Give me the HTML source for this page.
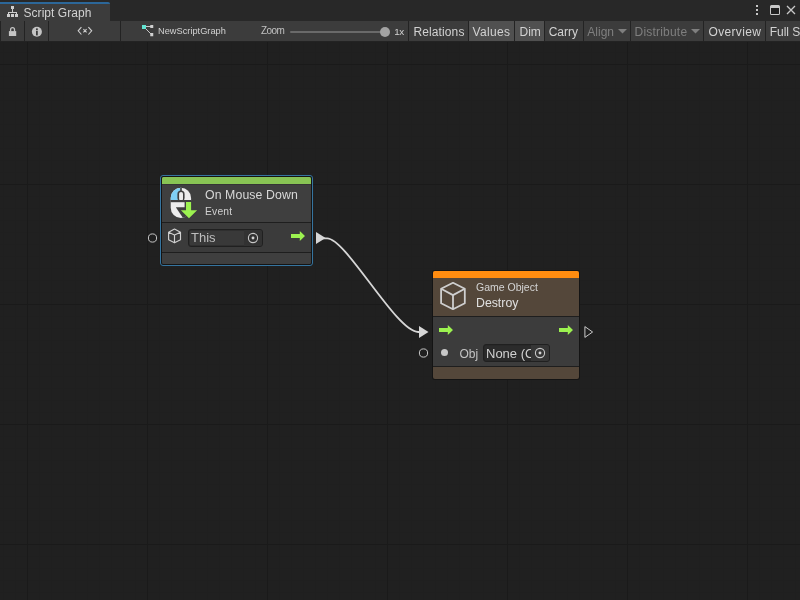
<!DOCTYPE html>
<html><head><meta charset="utf-8">
<style>
*{margin:0;padding:0;box-sizing:border-box}
html,body{width:800px;height:600px;overflow:hidden;background:#202020;font-family:"Liberation Sans",sans-serif}
.a{position:absolute}
#graph{left:0;top:42px;width:800px;height:558px;background-color:#202020;
 background-image:
  linear-gradient(to right,#1a1a1a 1px,transparent 1px),
  linear-gradient(to bottom,#1a1a1a 1px,transparent 1px),
  linear-gradient(to right,#1f1f1f 1px,transparent 1px),
  linear-gradient(to bottom,#1f1f1f 1px,transparent 1px);
 background-size:120px 120px,120px 120px,12px 12px,12px 12px;
 background-position:27px 22px,27px 22px,3px 10px,3px 10px}
#tabstrip{left:0;top:0;width:800px;height:21px;background:#282828}
#tab{left:0;top:2px;width:110px;height:19px;background:#3c3c3c;border-top:2px solid #2c6799;border-top-right-radius:2px}
#toolbar{left:0;top:21px;width:800px;height:21px;background:#3c3c3c;border-bottom:1px solid #232323}
.txt{color:#d2d2d2;white-space:nowrap}
.sep{top:21px;width:1px;height:20px;background:#232323}
.btn{top:21px;height:20px;color:#d2d2d2;font-size:12px;line-height:23px;white-space:nowrap}
.on{background:#505050}
.dis{color:#7f7f7f}
</style></head><body><div id="root" class="a" style="left:0;top:0;width:800px;height:600px;will-change:transform">
<div id="graph" class="a"></div>
<div id="tabstrip" class="a"></div>
<div id="tab" class="a"></div>
<!-- tab icon -->
<svg class="a" style="left:0;top:0" width="22" height="22" viewBox="0 0 22 22" shape-rendering="crispEdges">
 <g fill="#cdcdcd">
 <rect x="11" y="6" width="3" height="3"/>
 <rect x="12" y="9" width="1" height="3"/>
 <rect x="8" y="11.8" width="9" height="1"/>
 <rect x="8" y="12" width="1" height="2"/>
 <rect x="16" y="12" width="1" height="2"/>
 <rect x="7" y="14" width="3" height="3"/>
 <rect x="11" y="14" width="3" height="3"/>
 <rect x="15" y="14" width="3" height="3"/>
 </g>
</svg>
<div class="a txt" style="left:23.5px;top:6px;font-size:12px;line-height:14px;letter-spacing:0.05px">Script Graph</div>
<!-- window buttons -->
<div class="a" style="left:756px;top:5.3px;width:2px;height:2px;background:#c8c8c8"></div>
<div class="a" style="left:756px;top:9px;width:2px;height:2px;background:#c8c8c8"></div>
<div class="a" style="left:756px;top:12.7px;width:2px;height:2px;background:#c8c8c8"></div>
<div class="a" style="left:770px;top:5px;width:10px;height:10px;border:1px solid #c8c8c8;border-top-width:3.3px;border-radius:1.5px;background:#1f1f1f"></div>
<svg class="a" style="left:786px;top:5px" width="10" height="10" viewBox="0 0 10 10"><path d="M1 1L9 9M9 1L1 9" stroke="#c8c8c8" stroke-width="1.3"/></svg>

<div id="toolbar" class="a"></div>
<div class="a sep" style="left:0"></div>
<div class="a sep" style="left:24px"></div>
<div class="a sep" style="left:48px"></div>
<div class="a sep" style="left:120px"></div>
<div class="a sep" style="left:408px"></div>
<div class="a sep" style="left:468px"></div>
<div class="a sep" style="left:514px"></div>
<div class="a sep" style="left:544px"></div>
<div class="a sep" style="left:583px"></div>
<div class="a sep" style="left:630px"></div>
<div class="a sep" style="left:703px"></div>
<div class="a sep" style="left:765px"></div>

<!-- lock -->
<svg class="a" style="left:8px;top:26px" width="10" height="11" viewBox="0 0 10 11">
 <path d="M2.6 5.6V3.6a1.95 1.95 0 0 1 3.9 0V5.6" fill="none" stroke="#c4c4c4" stroke-width="1.3"/>
 <rect x="0.9" y="5.1" width="7.3" height="4.9" fill="#c4c4c4"/>
</svg>
<!-- info -->
<svg class="a" style="left:31px;top:26px" width="12" height="12" viewBox="0 0 12 12">
 <circle cx="5.9" cy="5.7" r="5" fill="#c4c4c4"/>
 <rect x="5" y="2.4" width="1.8" height="1.7" fill="#3c3c3c"/>
 <rect x="5" y="4.8" width="1.8" height="4.6" fill="#3c3c3c"/>
</svg>
<svg class="a" style="left:76px;top:25px" width="18" height="12" viewBox="0 0 18 12">
 <path d="M5.4 2.2L2.2 5.8L5.4 9.5M12.4 2.2L15.7 5.8L12.4 9.5M7.4 4.2L10.6 7.4M10.6 4.2L7.4 7.4" fill="none" stroke="#cfcfcf" stroke-width="1.1"/></svg>
<!-- graph icon -->
<svg class="a" style="left:141.75px;top:25px" width="13" height="12" viewBox="0 0 13 12">
 <path d="M3.5 1.5H9M3 3L9.5 9.5" stroke="#c8c8c8" stroke-width="1"/>
 <rect x="0" y="0" width="4" height="4" fill="#62e4d2"/>
 <rect x="8.25" y="0" width="3" height="3" fill="#d0d0d0"/>
 <rect x="8.25" y="8" width="3" height="3.25" fill="#d0d0d0"/>
</svg>
<div class="a txt" style="left:158px;top:26px;font-size:9.25px;line-height:11px">NewScriptGraph</div>
<div class="a txt" style="left:261px;top:24.8px;font-size:10px;line-height:11px;letter-spacing:-0.55px;color:#c0c0c0">Zoom</div>
<div class="a" style="left:290px;top:31px;width:94px;height:2px;background:#6a6a6a;border-radius:1px"></div>
<div class="a" style="left:379.8px;top:26.8px;width:10.4px;height:10.4px;background:#a3a3a3;border-radius:50%"></div>
<div class="a txt" style="left:394.3px;top:25.5px;font-size:9.8px;line-height:11px;letter-spacing:-0.5px">1x</div>

<div class="a on" style="left:469px;top:21px;width:45px;height:20px"></div>
<div class="a on" style="left:515px;top:21px;width:29px;height:20px"></div>
<div class="a btn" style="left:413.5px;letter-spacing:0.11px">Relations</div>
<div class="a btn" style="left:472.6px;letter-spacing:0.33px">Values</div>
<div class="a btn" style="left:519.5px">Dim</div>
<div class="a btn" style="left:548.7px">Carry</div>
<div class="a btn dis" style="left:587.3px">Align</div>
<div class="a btn dis" style="left:634.5px;letter-spacing:0.21px">Distribute</div>
<div class="a btn" style="left:708.5px;letter-spacing:0.34px">Overview</div>
<div class="a btn" style="left:769.7px">Full Screen</div>
<svg class="a" style="left:618px;top:29px" width="9" height="5" viewBox="0 0 9 5"><path d="M0 0H9L4.5 4.5Z" fill="#7f7f7f"/></svg>
<svg class="a" style="left:691px;top:29px" width="9" height="5" viewBox="0 0 9 5"><path d="M0 0H9L4.5 4.5Z" fill="#7f7f7f"/></svg>


<!-- ===== edge ===== -->
<svg class="a" style="left:0;top:0" width="800" height="600" viewBox="0 0 800 600">
 <path d="M322 238.45 L327.2 238.45 C346.1 238.45 396.4 332 418.1 332 L421 332" fill="none" stroke="#d6d6d6" stroke-width="1.8"/>
 <path d="M316 231.9 L325.6 238 L316 244.1 Z" fill="#d6d6d6"/>
 <path d="M419 326.1 L428.5 332 L419 337.9 Z" fill="#d6d6d6"/>
 <circle cx="152.5" cy="238" r="4.1" fill="none" stroke="#d0d0d0" stroke-width="0.95"/>
 <circle cx="423.5" cy="353" r="4.1" fill="none" stroke="#d0d0d0" stroke-width="0.95"/>
 <path d="M584.9 326.6 L592.6 332 L584.9 337.4 Z" fill="none" stroke="#d2d2d2" stroke-width="0.95" stroke-linejoin="miter"/>
</svg>

<!-- ===== node 1 ===== -->
<div class="a" style="left:160px;top:175px;width:153px;height:91px;border:1px solid #35749f;border-radius:3px;background:#141414"></div>
<div class="a" style="left:162px;top:177px;width:149px;height:87px;background:#3f3f3f;border-radius:1.5px;overflow:hidden">
 <div class="a" style="left:0;top:0;width:149px;height:7px;background:#88c454"></div>
 <div class="a" style="left:0;top:7px;width:149px;height:1px;background:#343434"></div>
 <div class="a" style="left:0;top:45px;width:149px;height:1px;background:#1e1e1e"></div>
 <div class="a" style="left:0;top:46px;width:149px;height:29px;background:#3b3b3b"></div>
 <div class="a" style="left:0;top:75px;width:149px;height:1px;background:#1e1e1e"></div>
</div>
<!-- mouse icon -->
<svg class="a" style="left:168px;top:185px" width="32" height="36" viewBox="0 0 32 36">
 <defs><clipPath id="mc"><rect x="2.7" y="2.7" width="20.4" height="30.3" rx="10.2"/></clipPath></defs>
 <g clip-path="url(#mc)">
  <rect x="0" y="0" width="32" height="36" fill="#ececec"/>
  <rect x="0" y="0" width="12.6" height="15" fill="#7fd0f6"/>
  <rect x="0" y="15" width="32" height="2.1" fill="#3f3f3f"/>
  <rect x="12.2" y="0" width="1.6" height="7" fill="#3f3f3f"/>
  <rect x="9.4" y="5.4" width="7.2" height="11" rx="3.6" fill="#3f3f3f"/>
  <rect x="11.1" y="6.9" width="3.9" height="9" rx="1.95" fill="#ececec"/>
  <rect x="0" y="15" width="32" height="2.1" fill="#3f3f3f"/>
  <path d="M7.8 22.2 L18 22.2 L18 36 L 17 36 Z" fill="#3f3f3f"/>
 </g>
 <path d="M16.6 15.8 L24.6 15.8 L24.6 23.7 L31.5 23.7 L21 35 L10.5 23.7 L16.6 23.7 Z" fill="#3f3f3f"/>
 <path d="M18 17.1 L23.1 17.1 L23.1 25.2 L29.1 25.2 L21 33.2 L12.9 25.2 L18 25.2 Z" fill="#9cf250"/>
</svg>
<div class="a txt" style="left:205px;top:188px;font-size:12.3px;line-height:14px;color:#d8d8d8;letter-spacing:0.1px">On Mouse Down</div>
<div class="a txt" style="left:205px;top:205.5px;font-size:10.3px;line-height:12px;color:#cfcfcf;letter-spacing:0.2px">Event</div>
<!-- cube small -->
<svg class="a" style="left:164px;top:226px" width="22" height="22" viewBox="0 0 22 22">
 <path d="M10.5 3.1 L16.5 6.2 L16.5 13.8 L10.5 16.8 L4.6 13.8 L4.6 6.2 Z M4.6 6.2 L10.5 9 L16.5 6.2 M10.5 9 L10.5 16.8" fill="none" stroke="#d0d0d0" stroke-width="1.15" stroke-linejoin="round"/>
</svg>
<!-- field This -->
<div class="a" style="left:188px;top:229px;width:75px;height:18px;background:#393939;border:1px solid #202020;box-shadow:inset 0 0 0 0.5px #262626;border-radius:3px"></div>
<div class="a" style="left:244px;top:230px;width:18px;height:16px;background:#323232;border-radius:0 2px 2px 0"></div>
<div class="a txt" style="left:191px;top:230px;font-size:13px;line-height:15px;color:#bebebe">This</div>
<svg class="a" style="left:247px;top:232px" width="12" height="12" viewBox="0 0 12 12">
 <circle cx="6" cy="6" r="4.6" fill="none" stroke="#c8c8c8" stroke-width="1.1"/>
 <circle cx="6" cy="6" r="1.45" fill="#d4d4d4"/>
</svg>
<!-- green arrow -->
<svg class="a" style="left:290px;top:230px" width="16" height="12" viewBox="0 0 16 12">
 <path d="M1 4 L9.8 4 L9.8 1 L15 6 L9.8 11 L9.8 8 L1 8 Z" fill="#9cf250"/>
</svg>

<!-- ===== node 2 ===== -->
<div class="a" style="left:432px;top:270px;width:148px;height:110px;background:#141414;border-radius:3px"></div>
<div class="a" style="left:433px;top:271px;width:146px;height:108px;background:#54473a;border-radius:2px;overflow:hidden">
 <div class="a" style="left:0;top:0;width:146px;height:7px;background:#ff8c10"></div>
 <div class="a" style="left:0;top:45px;width:146px;height:1px;background:#1e1e1e"></div>
 <div class="a" style="left:0;top:46px;width:146px;height:49px;background:#3c3c3c"></div>
 <div class="a" style="left:0;top:95px;width:146px;height:1px;background:#1e1e1e"></div>
</div>
<svg class="a" style="left:438px;top:280px" width="30" height="32" viewBox="0 0 30 32">
 <path d="M15 2.8 L26.8 8.8 L26.8 23.2 L15 29.2 L3.1 23.2 L3.1 8.8 Z M3.1 8.8 L15 15.1 L26.8 8.8 M15 15.1 L15 29.2" fill="none" stroke="#cfcfcf" stroke-width="1.8" stroke-linejoin="round"/>
</svg>
<div class="a txt" style="left:476px;top:280.6px;font-size:10.5px;line-height:12px;color:#d4d4d4">Game Object</div>
<div class="a txt" style="left:476px;top:296px;font-size:12.3px;line-height:14px;color:#e0e0e0">Destroy</div>
<svg class="a" style="left:438px;top:324px" width="16" height="12" viewBox="0 0 16 12">
 <path d="M1 4 L9.8 4 L9.8 1 L15 6 L9.8 11 L9.8 8 L1 8 Z" fill="#9cf250"/>
</svg>
<svg class="a" style="left:558px;top:324px" width="16" height="12" viewBox="0 0 16 12">
 <path d="M1 4 L9.8 4 L9.8 1 L15 6 L9.8 11 L9.8 8 L1 8 Z" fill="#9cf250"/>
</svg>
<div class="a" style="left:441.3px;top:349.3px;width:7px;height:7px;background:#c8c8c8;border-radius:50%"></div>
<div class="a txt" style="left:459.5px;top:346.5px;font-size:12px;line-height:15px;color:#c4c4c4">Obj</div>
<div class="a" style="left:483px;top:344px;width:67px;height:18px;background:#2b2b2b;border:1px solid #202020;box-shadow:inset 0 0 0 0.5px #262626;border-radius:3px"></div>
<div class="a" style="left:531px;top:345px;width:18px;height:16px;background:#363636;border-radius:0 2px 2px 0"></div>
<div class="a txt" style="left:486px;top:346px;width:45px;overflow:hidden;font-size:13px;line-height:15px;color:#d0d0d0">None (Object)</div>
<svg class="a" style="left:534px;top:347px" width="12" height="12" viewBox="0 0 12 12">
 <circle cx="6" cy="6" r="4.6" fill="none" stroke="#c8c8c8" stroke-width="1.1"/>
 <circle cx="6" cy="6" r="1.45" fill="#d4d4d4"/>
</svg>
</div></body></html>
